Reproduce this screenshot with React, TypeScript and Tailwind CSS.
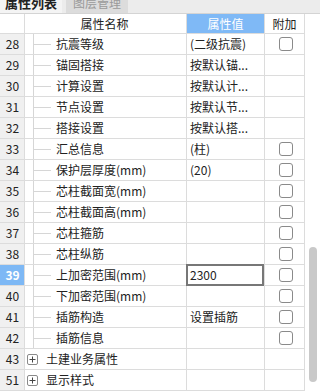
import React from 'react'

type Row = {
  no: number
  name: string
  value?: string
  check?: boolean
  group?: boolean
  editing?: boolean
}

const rows: Row[] = [
  { no: 28, name: '抗震等级', value: '(二级抗震)', check: true },
  { no: 29, name: '锚固搭接', value: '按默认锚...' },
  { no: 30, name: '计算设置', value: '按默认计...' },
  { no: 31, name: '节点设置', value: '按默认节...' },
  { no: 32, name: '搭接设置', value: '按默认搭...' },
  { no: 33, name: '汇总信息', value: '(柱)', check: true },
  { no: 34, name: '保护层厚度(mm)', value: '(20)', check: true },
  { no: 35, name: '芯柱截面宽(mm)', check: true },
  { no: 36, name: '芯柱截面高(mm)', check: true },
  { no: 37, name: '芯柱箍筋', check: true },
  { no: 38, name: '芯柱纵筋', check: true },
  { no: 39, name: '上加密范围(mm)', value: '2300', check: true, editing: true },
  { no: 40, name: '下加密范围(mm)', check: true },
  { no: 41, name: '插筋构造', value: '设置插筋', check: true },
  { no: 42, name: '插筋信息', check: true },
  { no: 43, name: '土建业务属性', group: true },
  { no: 51, name: '显示样式', group: true },
]

function Checkbox() {
  return <div className="w-[14px] h-[14px] rounded-[3px] border border-[#8a8a8a] bg-white" />
}

function PlusBox() {
  return (
    <div className="w-[11px] h-[11px] rounded-[2px] border border-[#8a8a8a] bg-white flex items-center justify-center">
      <svg width="7" height="7" viewBox="0 0 7 7">
        <path d="M0.5 3.5H6.5M3.5 0.5V6.5" stroke="#444" strokeWidth="1" />
      </svg>
    </div>
  )
}

function PropRow({ row }: { row: Row }) {
  const selected = !!row.editing
  return (
    <div className="flex h-[21px] border-b border-[#dcdcdc]">
      <div
        className={`w-[25px] shrink-0 border-r border-[#dcdcdc] flex items-center justify-center pl-px ${
          selected ? 'bg-[#7db8f5] text-white font-bold' : 'bg-[#f0f0f0] text-[#222]'
        }`}
      >
        {row.no}
      </div>
      <div className="w-[162px] shrink-0 border-r border-[#dcdcdc] flex items-stretch">
        {row.group ? (
          <div className="flex items-center pl-[2px] gap-[8px]">
            <PlusBox />
            <span>{row.name}</span>
          </div>
        ) : (
          <>
            <div className="w-[8px] shrink-0" />
            <div className="w-[18px] shrink-0 border-l border-[#d6d6d6] flex items-center">
              <div className="h-px w-[17px] bg-[#d6d6d6]" />
            </div>
            <span className="flex items-center pl-[5px] whitespace-nowrap">{row.name}</span>
          </>
        )}
      </div>
      <div className="w-[78px] shrink-0 border-r border-[#dcdcdc] flex items-stretch">
        {row.editing ? (
          <div className="-ml-px -mt-px flex-1 h-[22px] border-2 border-[#777] flex items-center pl-[2px] bg-white">
            {row.value}
          </div>
        ) : (
          <span className="flex items-center pl-[3px] whitespace-nowrap">{row.value}</span>
        )}
      </div>
      <div className="w-[40px] shrink-0 border-r border-[#dcdcdc] flex items-center justify-center pl-[2px]">
        {row.check && <Checkbox />}
      </div>
    </div>
  )
}

export default function App() {
  return (
    <div
      className="w-[320px] h-[392px] overflow-hidden bg-white text-[12px] text-[#222] flex flex-col"
      style={{ fontFamily: '"Noto Sans CJK SC", "Noto Sans", sans-serif' }}
    >
      {/* tabs, scrolled slightly out of view */}
      <div className="h-[14px] shrink-0 bg-[#ececec] border-b border-[#d4d4d4] flex overflow-hidden">
        <div className="w-[62px] bg-[#f4f4f4] flex justify-center">
          <span className="text-[13px] font-bold leading-[13px] -mt-[4px] text-[#222]">属性列表</span>
        </div>
        <div className="w-[4px]" />
        <div className="w-[62px] bg-[#dcdcdc] flex justify-center">
          <span className="text-[12px] leading-[13px] -mt-[4px] text-[#9a9a9a]">图层管理</span>
        </div>
      </div>

      <div className="flex flex-1 min-h-0">
        <div className="w-[305px] shrink-0 flex flex-col">
          {/* header */}
          <div className="flex h-[20px] shrink-0 border-b border-[#dcdcdc]">
            <div className="w-[25px] border-r border-[#dcdcdc]" />
            <div className="w-[162px] border-r border-[#dcdcdc] flex items-center justify-center pr-[2px]">
              属性名称
            </div>
            <div className="w-[78px] border-r border-[#dcdcdc] bg-[#7fb9f6] text-white flex items-center justify-center">
              属性值
            </div>
            <div className="w-[40px] border-r border-[#dcdcdc] flex items-center justify-center">附加</div>
          </div>
          {rows.map((r) => (
            <PropRow key={r.no} row={r} />
          ))}
        </div>

        {/* scrollbar */}
        <div className="w-[15px] shrink-0 flex flex-col pl-[4px]">
          <div className="mt-[233px] h-[135px] w-[8px] rounded-full bg-[#c9c9c9]" />
        </div>
      </div>
    </div>
  )
}
